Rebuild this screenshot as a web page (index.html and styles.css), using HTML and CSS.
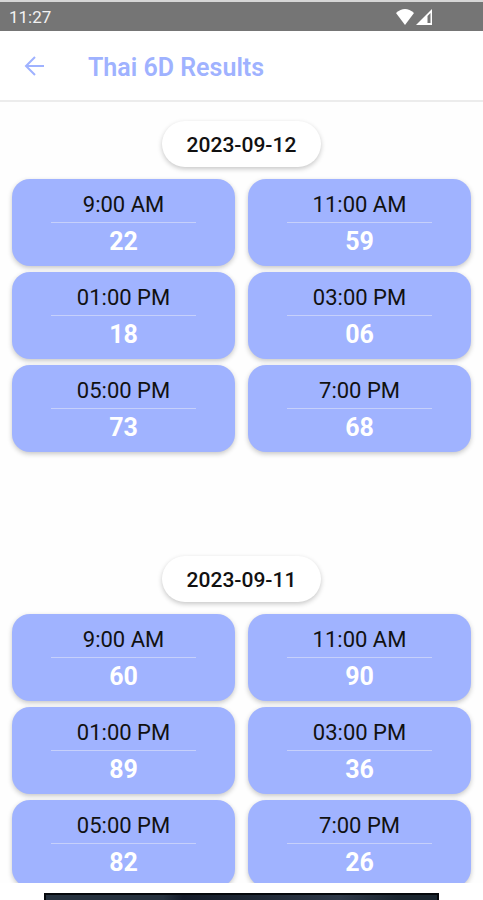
FILE: index.html
```html
<!DOCTYPE html>
<html lang="en">
<head>
    <meta charset="UTF-8">
    <meta name="viewport" content="width=device-width, initial-scale=1.0">
    <title>Thai 6D Results</title>
    <link rel="stylesheet" href="styles.css">
</head>
<body>
    <div class="status-bar">
        <span>11:27</span>
        <div class="status-icons">
            <svg width="18" height="16" viewBox="0 0 18 16">
                <path d="M0 4 Q9 -4 18 4 L9 16 Z" fill="#fff"/>
            </svg>
            <svg width="16" height="16" viewBox="0 0 16 16">
                <path fill-rule="evenodd" d="M16 0 V16 H0 Z M14.5 4 L11.5 7 V14 H14.5 Z" fill="#fff"/>
            </svg>
        </div>
    </div>

    <header class="header">
        <button class="back" type="button" aria-label="Back">
            <svg width="20" height="20" viewBox="0 0 20 20" fill="none" stroke="#9fb2ff" stroke-width="2">
                <path d="M20 10 H2 M11 1 L2 10 L11 19"/>
            </svg>
        </button>
        <h1>Thai 6D Results</h1>
    </header>

    <main class="results">
        <section class="day">
            <h2 class="date">2023-09-12</h2>
            <div class="grid">
                <div class="card"><span class="time">9:00 AM</span><span class="number">22</span></div>
                <div class="card"><span class="time">11:00 AM</span><span class="number">59</span></div>
                <div class="card"><span class="time">01:00 PM</span><span class="number">18</span></div>
                <div class="card"><span class="time">03:00 PM</span><span class="number">06</span></div>
                <div class="card"><span class="time">05:00 PM</span><span class="number">73</span></div>
                <div class="card"><span class="time">7:00 PM</span><span class="number">68</span></div>
            </div>
        </section>

        <section class="day">
            <h2 class="date">2023-09-11</h2>
            <div class="grid">
                <div class="card"><span class="time">9:00 AM</span><span class="number">60</span></div>
                <div class="card"><span class="time">11:00 AM</span><span class="number">90</span></div>
                <div class="card"><span class="time">01:00 PM</span><span class="number">89</span></div>
                <div class="card"><span class="time">03:00 PM</span><span class="number">36</span></div>
                <div class="card"><span class="time">05:00 PM</span><span class="number">82</span></div>
                <div class="card"><span class="time">7:00 PM</span><span class="number">26</span></div>
            </div>
        </section>
    </main>

    <footer class="ad">
        <div class="banner"></div>
    </footer>
</body>
</html>
```

FILE: styles.css
```css
* {
    box-sizing: border-box;
}

body {
    margin: 0;
    height: 100vh;
    display: flex;
    flex-direction: column;
    overflow: hidden;
    font-family: Roboto, sans-serif;
    background-color: #fefefe;
    color: #111;
}

.status-bar {
    display: flex;
    justify-content: space-between;
    align-items: center;
    height: 31px;
    padding: 0 51px 0 9px;
    border-top: 2px solid #d6d6d6;
    background-color: #757575;
    color: #f2f2f2;
    font-size: 17px;
    flex-shrink: 0;
}

.status-icons {
    display: flex;
    gap: 2px;
}

.header {
    display: flex;
    align-items: center;
    gap: 44px;
    height: 71px;
    padding: 0 24px;
    border-bottom: 2px solid #ececec;
    background-color: #fff;
    flex-shrink: 0;
}

.header h1 {
    margin: 0;
    padding-top: 4px;
    font-size: 25px;
    font-weight: 600;
    color: #9fb2ff;
}

.back {
    display: flex;
    padding: 0;
    border: none;
    background: none;
    cursor: pointer;
}

.results {
    flex: 1;
    min-height: 0;
    overflow: hidden;
    padding: 19px 12px 0;
}

.day {
    display: flex;
    flex-direction: column;
    align-items: center;
    margin-bottom: 104px;
}

.date {
    margin: 0 0 12px;
    padding: 2px 25px 0;
    border-radius: 23px;
    background-color: #fff;
    box-shadow: 0 2px 5px rgba(0, 0, 0, 0.22);
    font-size: 21px;
    font-weight: 500;
    line-height: 44px;
}

.grid {
    display: grid;
    grid-template-columns: 1fr 1fr;
    gap: 6px 13px;
    width: 100%;
}

.card {
    display: flex;
    flex-direction: column;
    align-items: center;
    height: 87px;
    padding-top: 8px;
    border-radius: 18px;
    background-color: #a0b3ff;
    box-shadow: 0 2px 5px rgba(0, 0, 0, 0.22);
}

.time {
    width: 65%;
    border-bottom: 1px solid #c6d0fb;
    font-size: 22px;
    line-height: 35px;
    text-align: center;
}

.number {
    color: #fff;
    font-size: 25px;
    font-weight: 700;
    line-height: 38px;
}

.ad {
    height: 17px;
    padding: 10px 44px 0;
    background-color: #fff;
    overflow: hidden;
    flex-shrink: 0;
}

.banner {
    height: 62px;
    border: 2px solid #05080c;
    background: linear-gradient(90deg, #26323f 30%, #141c2a 35%, #1d2633 50%, #2f3a4a 75%, #1b2630 90%);
}
```
